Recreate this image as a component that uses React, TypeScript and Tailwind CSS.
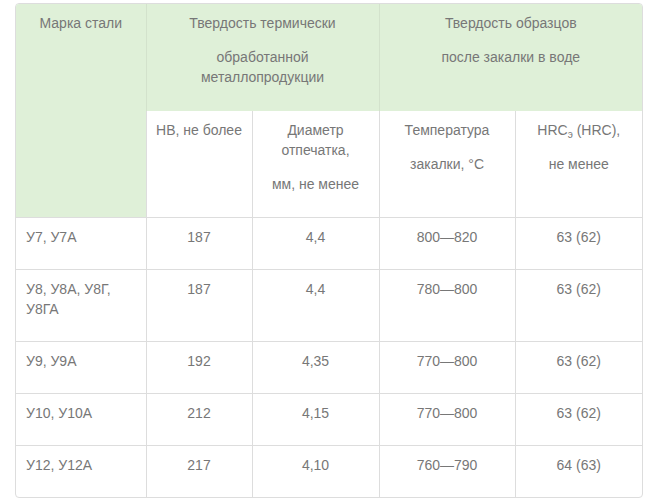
import React from "react";

const B = "border-[#dddddd]";

function Cell({
  children,
  className = "",
  colSpan,
  rowSpan,
}: {
  children: React.ReactNode;
  className?: string;
  colSpan?: number;
  rowSpan?: number;
}) {
  return (
    <td
      colSpan={colSpan}
      rowSpan={rowSpan}
      className={`align-top pt-[9px] pb-[8px] px-[8px] leading-[20px] ${className}`}
    >
      {children}
    </td>
  );
}

const P = ({ children }: { children: React.ReactNode }) => (
  <p className="mb-[14px]">{children}</p>
);

const rows: [React.ReactNode, string, string, string, string][] = [
  ["У7, У7А", "187", "4,4", "800—820", "63 (62)"],
  [
    <>
      У8, У8А, У8Г,
      <br />
      У8ГА
    </>,
    "187",
    "4,4",
    "780—800",
    "63 (62)",
  ],
  ["У9, У9А", "192", "4,35", "770—800", "63 (62)"],
  ["У10, У10А", "212", "4,15", "770—800", "63 (62)"],
  ["У12, У12А", "217", "4,10", "760—790", "64 (63)"],
];

export default function App() {
  return (
    <div className="w-[660px] h-[501px] bg-white pt-[3px] pl-[15px]">
      <div className="w-[628px] border border-[#dddddd] rounded-[4px] overflow-hidden">
        <table className="w-[626px] table-fixed border-collapse text-[14px] text-[#777777] font-['Liberation_Sans',Arial,sans-serif]">
          <colgroup>
            <col className="w-[130px]" />
            <col className="w-[106px]" />
            <col className="w-[127px]" />
            <col className="w-[136px]" />
            <col />
          </colgroup>
          <tbody>
            <tr className="h-[107px]">
              <Cell rowSpan={2} className="bg-[#dff0d8] text-center">
                <P>Марка стали</P>
              </Cell>
              <Cell colSpan={2} className="bg-[#dff0d8] text-center border-l border-[#d3e2cc]">
                <P>Твердость термически</P>
                <P>
                  обработанной
                  <br />
                  металлопродукции
                </P>
              </Cell>
              <Cell colSpan={2} className="bg-[#dff0d8] text-center border-l border-[#d3e2cc]">
                <P>Твердость образцов</P>
                <P>после закалки в воде</P>
              </Cell>
            </tr>
            <tr className="h-[106px]">
              <Cell className={`text-center border-l ${B}`}>
                <P>НВ, не более</P>
              </Cell>
              <Cell className={`text-center border-l ${B}`}>
                <P>
                  Диаметр
                  <br />
                  отпечатка,
                </P>
                <P>мм, не менее</P>
              </Cell>
              <Cell className={`text-center border-l ${B}`}>
                <P>Температура</P>
                <P>закалки, °С</P>
              </Cell>
              <Cell className={`text-center border-l ${B}`}>
                <P>
                  HRC<sub className="text-[10px]">э</sub> (HRC),
                </P>
                <P>не менее</P>
              </Cell>
            </tr>
            {rows.map((r, i) => (
              <tr key={i} className={`border-t ${B}`}>
                <Cell className="text-left pl-[10px]">
                  <P>{r[0]}</P>
                </Cell>
                <Cell className={`text-center border-l ${B}`}>
                  <P>{r[1]}</P>
                </Cell>
                <Cell className={`text-center border-l ${B}`}>
                  <P>{r[2]}</P>
                </Cell>
                <Cell className={`text-center border-l ${B}`}>
                  <P>{r[3]}</P>
                </Cell>
                <Cell className={`text-center border-l ${B}`}>
                  <P>{r[4]}</P>
                </Cell>
              </tr>
            ))}
          </tbody>
        </table>
      </div>
    </div>
  );
}
